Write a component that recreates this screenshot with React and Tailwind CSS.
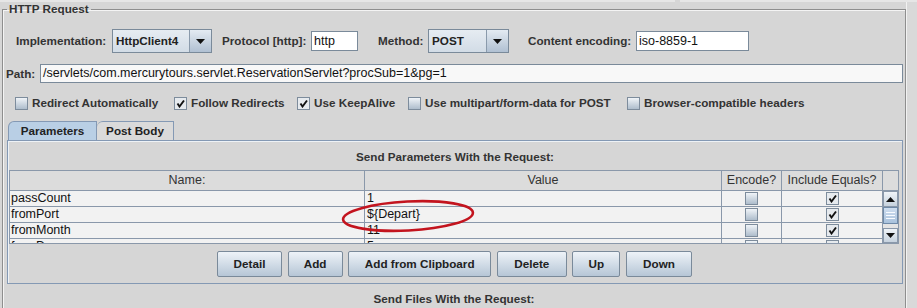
import React from 'react';

const Arrow = ({ up }) => (
  <svg width="9" height="5" viewBox="0 0 9 5">
    <path d={up ? 'M0 5 L4.5 0 L9 5 Z' : 'M0 0 L9 0 L4.5 5 Z'} fill="#111" />
  </svg>
);

const CheckMark = () => (
  <svg width="9" height="9" viewBox="0 0 9 9">
    <path d="M1.5 4.5 L3.5 7.5 L8 1.5" stroke="#111" strokeWidth="1.9" fill="none" />
  </svg>
);

const Box = ({ checked }) => (
  <span
    className={`w-[13px] h-[13px] shrink-0 border border-[#7d8c9c] flex items-center justify-center ${
      checked ? 'bg-[#e6eaee]' : 'bg-linear-to-b from-[#f0f4f8] to-[#aebdcc]'
    }`}
  >
    {checked && <CheckMark />}
  </span>
);

const Combo = ({ value, width }) => (
  <div className={`flex h-[24px] ${width} border border-[#7a8a9a] bg-linear-to-b from-[#e6ecf2] to-[#d2dce6]`}>
    <div className="flex-1 flex items-center pl-[3px] font-bold text-[11.7px] text-[#222]">{value}</div>
    <div className="w-[22px] border-l border-[#8a9aab] flex items-center justify-center bg-linear-to-b from-[#e4ebf2] to-[#b0c0d2]">
      <Arrow />
    </div>
  </div>
);

const TextBox = ({ value, width }) => (
  <div className={`h-[20px] ${width} border border-[#7a8a9a] bg-white flex items-center pl-[2px] text-[12.5px] text-[#111]`}>
    {value}
  </div>
);

const Option = ({ label, checked, width }) => (
  <div className={`flex items-center gap-[4px] ${width}`}>
    <Box checked={checked} />
    <span className="font-bold text-[11.7px] text-[#333]">{label}</span>
  </div>
);

const Button = ({ label, width }) => (
  <div
    className={`${width} h-[26px] border border-[#7a8a9a] rounded-[2px] bg-linear-to-b from-[#eef3f8] to-[#b6c6d6] flex items-center justify-center font-bold text-[11.7px] text-[#222]`}
  >
    {label}
  </div>
);

const rows = [
  { name: 'passCount', value: '1' },
  { name: 'fromPort', value: '${Depart}' },
  { name: 'fromMonth', value: '11' },
  { name: 'fromDay', value: '5' },
];

export default function App() {
  return (
    <div className="relative w-[917px] h-[308px] overflow-hidden bg-[#d6d6d6] font-['Liberation_Sans',Arial,sans-serif]">
      {/* leftover bottom edge of the panel above */}
      <div className="flex h-[2px] gap-[5px]">
        <div className="w-[675px] bg-[#e6e6e6]" />
        <div className="flex-1 bg-[#e6e6e6]" />
      </div>

      <div className="flex">
        <fieldset className="ml-[2px] w-[904px] h-[340px] border border-[#8e8e8e] shadow-[inset_1px_1px_0_#f4f4f4]">
          <legend className="ml-[4px] px-[2px] font-bold text-[11.7px] leading-[14px] text-[#333]">HTTP Request</legend>

          {/* implementation / protocol / method / encoding */}
          <div className="flex items-center mt-[13px] pl-[13px] h-[24px]">
            <span className="w-[96px] font-bold text-[11.7px] text-[#333]">Implementation:</span>
            <Combo value="HttpClient4" width="w-[100px]" />
            <span className="ml-[10px] w-[89px] font-bold text-[11.7px] text-[#333]">Protocol [http]:</span>
            <TextBox value="http" width="w-[47px]" />
            <span className="ml-[20px] w-[50px] font-bold text-[11.7px] text-[#333]">Method:</span>
            <Combo value="POST" width="w-[81px]" />
            <span className="ml-[19px] w-[108px] font-bold text-[11.7px] text-[#333]">Content encoding:</span>
            <TextBox value="iso-8859-1" width="w-[113px]" />
          </div>

          {/* path */}
          <div className="flex items-center mt-[11px] pl-[3px] pr-[2px] h-[19px]">
            <span className="w-[34px] font-bold text-[11.7px] text-[#333]">Path:</span>
            <div className="flex-1 h-[19px] border border-[#7a8a9a] bg-[#f8f8f8] flex items-center pl-[2px] text-[12.5px] text-[#111]">
              /servlets/com.mercurytours.servlet.ReservationServlet?procSub=1&amp;pg=1
            </div>
          </div>

          {/* options */}
          <div className="flex items-center mt-[12px] pl-[12px] h-[16px]">
            <Option label="Redirect Automatically" width="w-[159px]" />
            <Option label="Follow Redirects" checked width="w-[123px]" />
            <Option label="Use KeepAlive" checked width="w-[111px]" />
            <Option label="Use multipart/form-data for POST" width="w-[219px]" />
            <Option label="Browser-compatible headers" width="w-[200px]" />
          </div>

          {/* tabs */}
          <div className="flex mt-[10px] pl-[5px] h-[19px] items-end">
            <div className="w-[89px] h-[19px] border border-b-0 border-[#8499b4] rounded-tl-[6px] bg-[#b9cfe5] flex items-center justify-center font-bold text-[11.7px] text-[#222]">
              Parameters
            </div>
            <div className="w-[77px] h-[19px] border border-l-0 border-b-0 border-[#8499b4] rounded-tl-[6px] bg-[#dadada] flex items-center justify-center font-bold text-[11.7px] text-[#222]">
              Post Body
            </div>
          </div>

          {/* tab panel */}
          <div className="ml-[4px] w-[896px] border border-[#8499b4] shadow-[inset_1px_1px_0_#eef2f6] pt-[8px] pb-[6px]">
            <div className="h-[16px] flex items-center justify-center font-bold text-[11.7px] text-[#333]">
              Send Parameters With the Request:
            </div>

            <div className="mt-[5px] ml-[1px] w-[890px] border-t border-l border-[#8a98aa]">
              {/* header */}
              <div className="flex h-[20px] bg-[#dcdcdc] text-[12.5px] text-[#333]">
                <div className="w-[355px] border-r border-b border-[#8a98aa] flex items-center justify-center">Name:</div>
                <div className="w-[357px] border-r border-b border-[#8a98aa] flex items-center justify-center">Value</div>
                <div className="w-[60px] border-r border-b border-[#8a98aa] flex items-center justify-center">Encode?</div>
                <div className="w-[101px] border-r border-b border-[#8a98aa] flex items-center justify-center">Include Equals?</div>
                <div className="w-[16px] border-r border-b border-[#8a98aa]" />
              </div>

              {/* body */}
              <div className="flex h-[53px]">
                <div className="w-[873px] h-[53px] overflow-hidden bg-[#f2f2f2] border-b border-[#8a98aa]">
                  {rows.map((r) => (
                    <div key={r.name} className="flex h-[16px] border-b border-[#8a98aa] text-[12.5px] leading-[15px] text-[#111]">
                      <div className="w-[355px] border-r border-[#8a98aa] pl-[1px]">{r.name}</div>
                      <div className="w-[357px] border-r border-[#8a98aa] pl-[2px]">{r.value}</div>
                      <div className="w-[60px] border-r border-[#8a98aa] flex items-center justify-center">
                        <Box />
                      </div>
                      <div className="w-[101px] border-r border-[#8a98aa] flex items-center justify-center">
                        <Box checked />
                      </div>
                    </div>
                  ))}
                </div>
                <div className="w-[16px] h-[53px] flex flex-col bg-[#e4e4e4] border-r border-b border-[#8a98aa]">
                  <div className="h-[16px] border border-[#8a98aa] bg-linear-to-b from-[#f0f4f8] to-[#c6d2de] flex items-center justify-center">
                    <Arrow up />
                  </div>
                  <div className="h-[17px] border border-[#6f8aa8] bg-linear-to-b from-[#cfdef0] to-[#a9c2dc] flex flex-col items-center justify-center gap-[2px]">
                    <span className="w-[9px] h-px bg-[#f8fbff]" />
                    <span className="w-[9px] h-px bg-[#f8fbff]" />
                    <span className="w-[9px] h-px bg-[#f8fbff]" />
                  </div>
                  <div className="flex-1" />
                  <div className="h-[15px] border border-[#8a98aa] bg-linear-to-b from-[#f0f4f8] to-[#c6d2de] flex items-center justify-center">
                    <Arrow />
                  </div>
                </div>
              </div>
            </div>

            {/* buttons */}
            <div className="flex justify-center gap-[5.6px] mt-[7px] pr-[1px]">
              <Button label="Detail" width="w-[65px]" />
              <Button label="Add" width="w-[55px]" />
              <Button label="Add from Clipboard" width="w-[143px]" />
              <Button label="Delete" width="w-[70px]" />
              <Button label="Up" width="w-[48px]" />
              <Button label="Down" width="w-[66px]" />
            </div>
          </div>

          <div className="mt-[7px] h-[16px] flex items-center justify-center font-bold text-[11.7px] text-[#333]">
            Send Files With the Request:
          </div>
        </fieldset>
        <div className="flex-1 border-l border-[#f2f2f2] bg-[#d9d9d9]" />
      </div>

      {/* hand drawn highlight over the table */}
      <svg className="absolute left-[336px] top-[196px]" width="146" height="42" viewBox="0 0 146 42">
        <ellipse cx="72" cy="20" rx="65" ry="14.5" transform="rotate(-3 72 20)" fill="none" stroke="#c3141e" strokeWidth="2.6" />
      </svg>
    </div>
  );
}
